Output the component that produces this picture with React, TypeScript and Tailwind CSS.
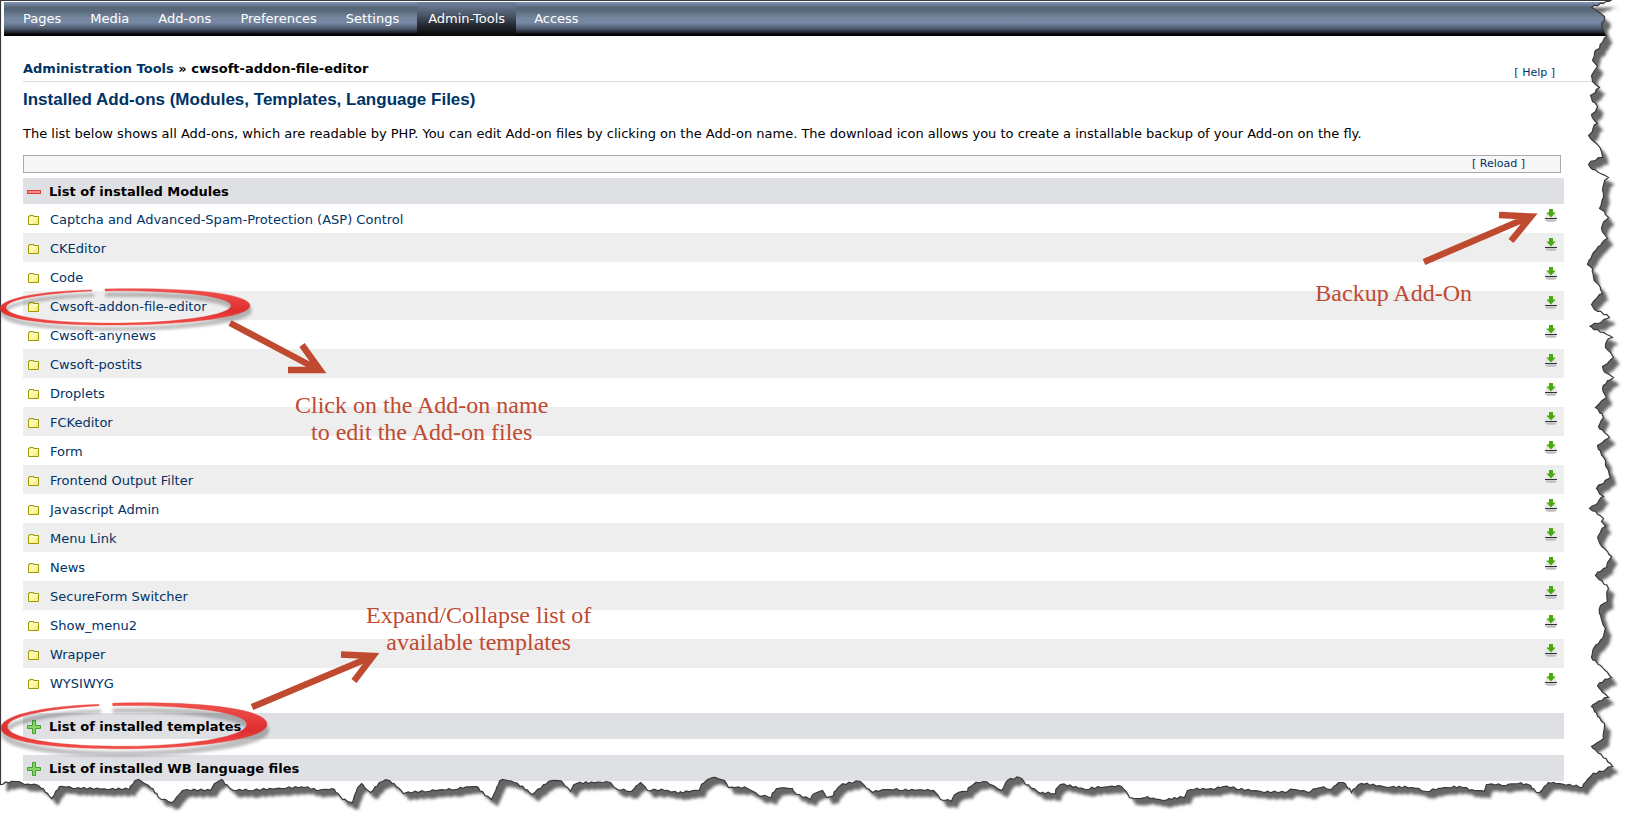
import { useState } from 'react';

const navItems = ['Pages', 'Media', 'Add-ons', 'Preferences', 'Settings', 'Admin-Tools', 'Access'];

const modules = [
  'Captcha and Advanced-Spam-Protection (ASP) Control',
  'CKEditor',
  'Code',
  'Cwsoft-addon-file-editor',
  'Cwsoft-anynews',
  'Cwsoft-postits',
  'Droplets',
  'FCKeditor',
  'Form',
  'Frontend Output Filter',
  'Javascript Admin',
  'Menu Link',
  'News',
  'SecureForm Switcher',
  'Show_menu2',
  'Wrapper',
  'WYSIWYG',
];

// Torn paper edge, clockwise from the top right corner to the bottom left one.
const edge: [number, number][] = [
  [1611, 0], [1591, 7], [1597, 11], [1604, 16], [1604, 20], [1601, 23], [1602, 28], [1604, 32], [1606, 36], [1602, 42],
  [1599, 48], [1594, 52], [1594, 55], [1592, 60], [1597, 66], [1594, 70], [1591, 75], [1592, 81], [1595, 84], [1599, 87],
  [1595, 92], [1590, 95], [1592, 101], [1597, 106], [1595, 111], [1591, 114], [1594, 120], [1597, 123], [1592, 131],
  [1588, 135], [1591, 139], [1597, 144], [1600, 148], [1602, 157], [1595, 160], [1588, 164], [1590, 167], [1608, 177],
  [1604, 180], [1602, 190], [1603, 197], [1599, 208], [1604, 211], [1608, 217], [1601, 228], [1607, 238], [1600, 245],
  [1593, 252], [1587, 264], [1592, 268], [1593, 277], [1597, 283], [1600, 287], [1602, 293], [1595, 299], [1591, 304],
  [1594, 309], [1609, 317], [1598, 323], [1589, 326], [1612, 337], [1606, 341], [1605, 347], [1610, 352], [1613, 357],
  [1607, 363], [1602, 366], [1603, 370], [1613, 377], [1602, 388], [1606, 397], [1599, 403], [1595, 407], [1603, 417],
  [1598, 426], [1609, 437], [1602, 442], [1597, 445], [1598, 449], [1605, 460], [1605, 465], [1608, 470], [1610, 477],
  [1603, 483], [1596, 488], [1603, 496], [1597, 503], [1589, 508], [1603, 518], [1601, 521], [1605, 526], [1598, 535],
  [1599, 542], [1607, 551], [1611, 556], [1607, 562], [1606, 567], [1600, 571], [1595, 575], [1608, 588], [1607, 601],
  [1600, 605], [1599, 613], [1605, 628], [1602, 638], [1593, 648], [1591, 657], [1611, 677], [1597, 685], [1608, 697],
  [1591, 706], [1604, 723], [1603, 738], [1597, 742], [1591, 746], [1612, 766], [1603, 771], [1591, 775], [1587, 779],
  [1582, 787], [1548, 782], [1539, 792], [1536, 792], [1530, 785], [1518, 783], [1506, 785], [1486, 784], [1484, 791],
  [1469, 790], [1462, 787], [1447, 787], [1426, 791], [1412, 787], [1387, 787], [1361, 783], [1351, 792], [1343, 782],
  [1338, 782], [1331, 789], [1320, 787], [1308, 792], [1294, 789], [1285, 792], [1265, 792], [1239, 789], [1223, 786],
  [1214, 789], [1190, 789], [1184, 797], [1163, 800], [1145, 797], [1137, 798], [1129, 797], [1121, 786], [1101, 787],
  [1085, 789], [1060, 784], [1055, 793], [1040, 793], [1024, 782], [1019, 777], [1007, 780], [1001, 790], [983, 781],
  [973, 784], [967, 791], [956, 793], [951, 801], [940, 799], [933, 790], [903, 790], [889, 789], [872, 792], [860, 781],
  [840, 785], [833, 795], [826, 797], [822, 790], [814, 793], [810, 799], [796, 794], [792, 788], [776, 788], [771, 797],
  [758, 795], [747, 788], [728, 787], [724, 780], [712, 777], [706, 780], [699, 790], [678, 793], [664, 790], [647, 790],
  [640, 782], [631, 791], [617, 789], [610, 782], [576, 783], [570, 791], [560, 780], [548, 781], [532, 794], [514, 782],
  [502, 779], [491, 799], [476, 786], [455, 789], [427, 791], [403, 793], [389, 780], [382, 781], [370, 792], [361, 783],
  [352, 802], [342, 799], [334, 789], [316, 790], [304, 787], [285, 788], [253, 790], [233, 790], [221, 779], [216, 782],
  [210, 790], [182, 790], [172, 802], [161, 799], [148, 785], [138, 779], [129, 789], [107, 789], [75, 788], [59, 786],
  [51, 798], [38, 785], [24, 784], [16, 781], [0, 784],
];

function roughen(points: [number, number][]) {
  const out: string[] = [];
  points.forEach(([x, y], i) => {
    out.push(`${x + 0.5} ${y + 0.5}`);
    const next = points[i + 1];
    if (!next) return;
    const steps = Math.floor(Math.hypot(next[0] - x, next[1] - y) / 3);
    for (let s = 1; s < steps; s++) {
      const t = s / steps;
      const n = Math.sin((i * 13 + s) * 12.9898) * 0.9;
      const m = Math.sin((i * 7 + s) * 78.233) * 0.9;
      out.push(`${(x + (next[0] - x) * t + n).toFixed(1)} ${(y + (next[1] - y) * t + m).toFixed(1)}`);
    }
  });
  return out.join('L');
}

const paper = `M0.5 0.5L${roughen(edge)}Z`;
const outside = `M-10 -10H1644V832H-10Z${paper}`;

function TornEdge() {
  return (
    <svg
      className="pointer-events-none absolute inset-0 h-full w-full"
      viewBox="0 0 1634 822"
      preserveAspectRatio="none"
      aria-hidden="true"
    >
      <defs>
        <clipPath id="outside">
          <path d={outside} clipRule="evenodd" />
        </clipPath>
        <filter id="soft" x="-2%" y="-2%" width="104%" height="104%">
          <feGaussianBlur stdDeviation="1.4" />
        </filter>
      </defs>
      <g clipPath="url(#outside)">
        <rect width="1634" height="822" fill="#fff" />
        <path d={paper} fill="#666" filter="url(#soft)" transform="translate(6 7)" />
      </g>
      <path d={paper} fill="none" stroke="#3a3a3c" strokeWidth="1.2" />
    </svg>
  );
}

function Ring({ id }: { id: string }) {
  const shape =
    'M105 1C190 -1 250 6 250 18C250 30 185 38 112 38C45 38 0 32 0 21C0 10 45 3 92 2V3C48 5 6 11 6 20C6 30 55 36 112 36C178 36 231 28 231 18C231 9 180 2 105 3Z';
  return (
    <svg className="h-full w-full overflow-visible" viewBox="0 0 250 39" preserveAspectRatio="none" aria-hidden="true">
      <defs>
        <linearGradient id={id} x1="0" y1="0" x2="0" y2="1">
          <stop offset="0" stopColor="#f0524d" />
          <stop offset="0.6" stopColor="#dd2f2f" />
          <stop offset="1" stopColor="#f5504a" />
        </linearGradient>
        <filter id={`${id}-shadow`} x="-10%" y="-30%" width="120%" height="180%">
          <feGaussianBlur stdDeviation="1.5" />
        </filter>
      </defs>
      <path d={shape} fill="#000" stroke="#000" strokeWidth="2" opacity="0.25" transform="translate(1 5)" filter={`url(#${id}-shadow)`} />
      <path d={shape} fill={`url(#${id})`} stroke="#e23a37" strokeWidth="0.4" />
    </svg>
  );
}

function Folder() {
  return (
    <svg className="h-3 w-3 shrink-0" viewBox="0 0 12 12" aria-hidden="true">
      <path d="M0.5 10.5V2.5H1.5V1.5H5.5V2.5H10.5V10.5Z" fill="#fdfba8" stroke="#9c9a00" />
      <path d="M1.5 9.5V3.5H9.5" fill="none" stroke="#fffee0" />
      <path d="M4 10L10 4V10Z" fill="#fbe08a" opacity="0.6" />
    </svg>
  );
}

function Download() {
  return (
    <svg className="h-4 w-4" viewBox="0 0 16 16" aria-hidden="true">
      <path d="M3.500 5.500H12.500L14 11V13.500H2V11Z" fill="#e6e6e6" />
      <ellipse cx="8" cy="13.500" rx="5.500" ry="1.300" fill="#bdbdbd" />
      <rect x="2" y="11" width="12" height="1" fill="#2f3338" />
      <path d="M6 2H10V5.500H12.600L8 10.500L3.400 5.500H6Z" fill="#4aaa0c" />
    </svg>
  );
}

function Toggle({ open }: { open: boolean }) {
  return open ? (
    <svg className="h-3.5 w-3.5" viewBox="0 0 14 14" aria-hidden="true">
      <rect x="0.5" y="5.5" width="13" height="3" fill="#f58a84" stroke="#e03a38" />
    </svg>
  ) : (
    <svg className="h-3.5 w-3.5" viewBox="0 0 14 14" aria-hidden="true">
      <path d="M5.5 0.5H8.5V5.5H13.5V8.5H8.5V13.5H5.5V8.5H0.5V5.5H5.5Z" fill="#8ad468" stroke="#3fa32c" />
    </svg>
  );
}

function Section({ title, items, initial }: { title: string; items: string[]; initial: boolean }) {
  const [open, setOpen] = useState(initial);
  return (
    <section className="mb-4">
      <h3>
        <button
          type="button"
          aria-expanded={open}
          onClick={() => setOpen(!open)}
          className="flex h-[26px] w-full items-center gap-2 bg-[#dfe0e4] pt-px pl-1 text-left text-[13px] font-bold text-black"
        >
          <Toggle open={open} />
          {title}
        </button>
      </h3>
      {open && (
        <ul>
          {items.map((name) => (
            <li key={name} className="flex h-[29px] items-center justify-between pr-[5px] pl-[5px] even:bg-[#eeeeee]">
              <a href="#edit" className="flex items-center gap-2.5 pt-0.5 text-[13px] text-[#003366]">
                <Folder />
                {name}
              </a>
              <a href="#download" aria-label={`Download ${name}`} className="pb-2">
                <Download />
              </a>
            </li>
          ))}
        </ul>
      )}
    </section>
  );
}

const arrow = 'fill-none stroke-[#bf4a30] stroke-[6.5]';
const note = 'pointer-events-none absolute text-center font-["Liberation_Serif",serif] text-2xl leading-[27px] text-[#bf4a30]';

export default function App() {
  return (
    <div className='relative overflow-hidden bg-white pb-[25px] font-["DejaVu_Sans",sans-serif] text-[13px] text-black'>
      <nav className="mt-0.5 ml-1 flex h-[34px] bg-[linear-gradient(#8595b8_0%,#546474_17%,#5c6c80_28%,#76889f_48%,#7486a2_62%,#4e596b_78%,#1d2128_90%,#000_96%)] pl-2">
        {navItems.map((item) => (
          <a
            key={item}
            href="#nav"
            className={
              item === 'Admin-Tools'
                ? 'mr-[7px] flex items-center bg-[linear-gradient(#70819b,#4f5b6d_35%,#23272f_70%,#07080a)] px-[11px] text-white'
                : 'mr-[7px] flex items-center px-[11px] text-white'
            }
          >
            {item}
          </a>
        ))}
      </nav>

      <header className="ml-[23px] flex h-[46px] items-end justify-between border-b border-[#dddddd] pr-[79px]">
        <h1 className="pb-0.5 text-[13px] leading-5 font-bold">
          <a href="#tools" className="text-[#003366]">Administration Tools</a> » cwsoft-addon-file-editor
        </h1>
        <a href="#help" className="text-[11px] leading-4 text-[#003366]">[ Help ]</a>
      </header>

      <main className="pr-[70px] pl-[23px]">
        <h2 className='pt-1.5 font-["Liberation_Sans",sans-serif] text-[17px] leading-6 font-bold text-[#003366]'>
          Installed Add-ons (Modules, Templates, Language Files)
        </h2>
        <p className="pt-3 pb-3 leading-[19px]">
          The list below shows all Add-ons, which are readable by PHP. You can edit Add-on files by clicking on the Add-on
          name. The download icon allows you to create a installable backup of your Add-on on the fly.
        </p>
        <div className="mr-[3px] mb-[5px] flex h-[18px] items-center justify-end border border-[#aaaaaa] bg-[#f7f7f7] pr-[35px]">
          <button type="button" className="text-[11px] leading-4 text-[#003366]">[ Reload ]</button>
        </div>

        <Section title="List of installed Modules" items={modules} initial={true} />
        <Section title="List of installed templates" items={[]} initial={false} />
        <Section title="List of installed WB language files" items={[]} initial={false} />
      </main>

      <TornEdge />

      <div className="pointer-events-none absolute top-[288px] left-0 h-[38px] w-[250px]">
        <Ring id="ring-module" />
      </div>
      <div className="pointer-events-none absolute top-[702px] left-px h-[48px] w-[266px]">
        <Ring id="ring-template" />
      </div>

      <svg className="pointer-events-none absolute top-[340px] left-[220px] h-[50px] w-[120px] overflow-visible" viewBox="220 340 120 50" aria-hidden="true">
        <path className={arrow} d="M230 323L317 369M302 345L320 370L288 370" strokeMiterlimit="10" />
      </svg>
      <svg className="pointer-events-none absolute top-[640px] left-[240px] h-[80px] w-[150px]" viewBox="240 640 150 80" aria-hidden="true">
        <path className={arrow} d="M252 707L371 657M341 654.500L373 656L354 681" strokeMiterlimit="10" />
      </svg>
      <svg className="pointer-events-none absolute top-[200px] right-[84px] h-[80px] w-[140px]" viewBox="1410 200 140 80" aria-hidden="true">
        <path className={arrow} d="M1424 262L1529 217M1499 215L1531 216.500L1511 241" strokeMiterlimit="10" />
      </svg>

      <p className={`${note} top-[392px] left-[295px]`}>
        Click on the Add-on name
        <br />
        to edit the Add-on files
      </p>
      <p className={`${note} top-[602px] left-[366px]`}>
        Expand/Collapse list of
        <br />
        available templates
      </p>
      <p className={`${note} top-[280px] right-[162px]`}>Backup Add-On</p>
    </div>
  );
}
